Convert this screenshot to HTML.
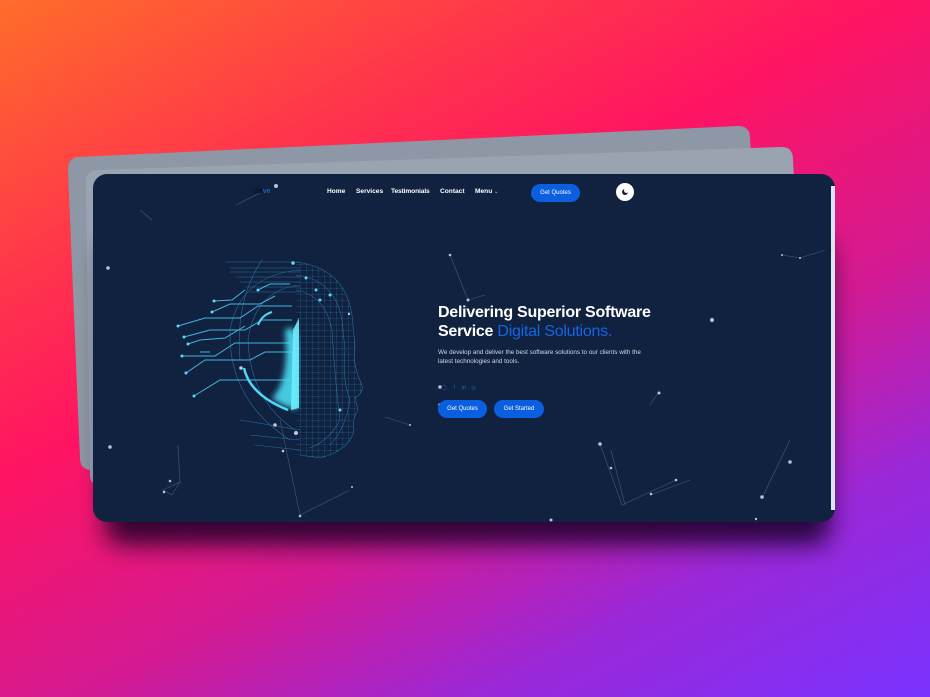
<!DOCTYPE html>
<html><head><meta charset="utf-8"><style>
*{margin:0;padding:0;box-sizing:border-box}
body{width:930px;height:697px;overflow:hidden;position:relative;font-family:"Liberation Sans",sans-serif;
background:linear-gradient(152deg,#ff6d2a 0%,#ff3a48 22%,#ff1462 40%,#d41a92 62%,#9a28d8 80%,#7a32ff 100%);}
svg.bg{position:absolute;left:0;top:0}
.t{position:absolute;color:#fff;white-space:nowrap}
.nav{top:188px;font-size:6.6px;font-weight:bold}
.btn{position:absolute;background:#0a5fe0;color:#fff;border-radius:10px;font-size:6px;text-align:center}
</style></head><body>
<svg class="bg" width="930" height="697" viewBox="0 0 930 697">
<defs>
<filter id="sh" x="-20%" y="-20%" width="140%" height="160%"><feGaussianBlur stdDeviation="12"/></filter>
<filter id="gl"><feGaussianBlur stdDeviation="3"/></filter>
<pattern id="mesh" width="6" height="6" patternUnits="userSpaceOnUse"><path d="M0,0 L6,0 M0,0 L0,6" stroke="#2a7fb5" stroke-width=".5"/><circle cx="0" cy="0" r=".7" fill="#3aa8d8"/></pattern>
<clipPath id="fc"><path d="M296,262 Q345,268 352,315 L355,345 Q352,365 362,385 Q364,392 355,398 L358,410 Q352,418 354,430 Q350,450 320,458 L296,455Z"/></clipPath>
</defs>
<path d="M78,157 L738,126 Q750,126 750,138 L760,300 L92,470 Q80,470 80,458 L68,170 Q68,158 78,157Z" fill="#8d97a5"/>
<path d="M96,170 L782,147 Q793,147 793,160 L800,300 L100,485 Q90,485 90,475 L86,182 Q86,171 96,170Z" fill="#9aa3b0"/>
<rect x="105" y="240" width="725" height="305" rx="16" fill="#120525" opacity=".85" filter="url(#sh)"/>
<rect x="93" y="174" width="742" height="348" rx="14" fill="#10223f"/>
<rect x="831" y="186" width="4" height="324" fill="#dfe5ee"/>
<g stroke="#4a6a8a" stroke-width=".6" fill="none" opacity=".8">
<path d="M140,210 L152,220"/><path d="M782,255 L800,258 L825,250"/><path d="M450,255 L468,300 L485,295"/>
<path d="M600,444 L622,505 L650,492 L676,480"/><path d="M650,495 L690,480"/><path d="M762,498 L790,440"/>
<path d="M163,490 L180,482 L172,495Z"/><path d="M180,482 L178,445"/><path d="M300,515 L350,490"/>
<path d="M650,405 L658,393"/><path d="M385,417 L410,425"/><path d="M611,450 L625,505"/><path d="M236,205 L262,192"/>
<path d="M280,420 L300,515"/>
</g>
<g fill="#b8c4d2">
<circle cx="276" cy="186" r="2"/><circle cx="108" cy="268" r="1.8"/><circle cx="450" cy="255" r="1.3"/><circle cx="468" cy="300" r="1.5"/>
<circle cx="712" cy="320" r="2"/><circle cx="782" cy="255" r="1"/><circle cx="800" cy="258" r="1"/><circle cx="110" cy="447" r="1.8"/>
<circle cx="170" cy="481" r="1.3"/><circle cx="164" cy="492" r="1.3"/><circle cx="600" cy="444" r="1.8"/><circle cx="611" cy="468" r="1.3"/>
<circle cx="790" cy="462" r="1.8"/><circle cx="762" cy="497" r="1.8"/><circle cx="676" cy="480" r="1.3"/><circle cx="651" cy="494" r="1.3"/>
<circle cx="300" cy="516" r="1.3"/><circle cx="551" cy="520" r="1.5"/><circle cx="756" cy="519" r="1.2"/><circle cx="440" cy="387" r="1.8"/>
<circle cx="440" cy="405" r="1.8"/><circle cx="659" cy="393" r="1.5"/><circle cx="410" cy="425" r="1"/><circle cx="352" cy="487" r="1"/>
</g>
<!-- face -->
<rect x="290" y="255" width="80" height="210" fill="url(#mesh)" clip-path="url(#fc)" opacity=".75"/>
<g fill="none" stroke="#2c82b8" stroke-width=".6" opacity=".8">
<path d="M296,262 Q345,268 352,315 L355,345 Q352,365 362,385 Q364,392 355,398 L358,410 Q352,418 354,430 Q350,450 320,458 L300,455"/>
<path d="M296,275 Q335,280 342,320 L345,350 Q342,380 350,400 Q345,430 330,445"/>
<path d="M296,290 Q325,295 332,330 Q335,380 340,420 Q330,440 310,448"/>
<path d="M300,270 Q240,275 230,330 Q228,400 290,440 M300,285 Q255,290 248,340 Q250,400 295,430 M262,260 Q235,300 240,360"/>
<path d="M226,262 L300,262 M230,268 L300,268 M230,272 L300,272 M236,277 L300,277 M240,282 L300,282 M246,287 L300,287 M250,292 L300,292"/>
<path d="M240,420 L300,430 M250,435 L300,440 M255,445 L300,450"/>
</g>
<g fill="none" stroke="#3fb6e0" stroke-width="1">
<path d="M178,326 L205,318 L240,318 L258,306 L292,306"/><path d="M184,337 L210,330 L245,330 L262,320 L292,320"/>
<path d="M188,344 L200,340 L225,338 L245,326"/><path d="M212,312 L230,304 L260,304 L275,296"/>
<path d="M214,301 L232,300 L245,290"/><path d="M182,356 L215,356 L235,343 L290,343"/>
<path d="M186,373 L205,360 L250,360 L265,352 L292,352"/><path d="M194,396 L220,380 L290,380"/>
<path d="M258,290 L270,284 L290,284"/><path d="M200,352 L210,352"/>
</g>
<g fill="#5fd6f5"><circle cx="178" cy="326" r="1.5"/><circle cx="184" cy="337" r="1.5"/><circle cx="188" cy="344" r="1.5"/><circle cx="212" cy="312" r="1.5"/><circle cx="214" cy="301" r="1.5"/><circle cx="182" cy="356" r="1.5"/><circle cx="186" cy="373" r="1.5"/><circle cx="194" cy="396" r="1.5"/><circle cx="258" cy="290" r="1.5"/><circle cx="293" cy="263" r="1.8"/><circle cx="306" cy="278" r="1.5"/><circle cx="316" cy="290" r="1.5"/><circle cx="330" cy="295" r="1.5"/><circle cx="320" cy="300" r="1.5"/><circle cx="340" cy="410" r="1.5"/></g>
<path d="M285,330 Q300,320 298,360 L297,410 Q280,405 272,398 Q290,380 285,330Z" fill="#4fe6ff" opacity=".85" filter="url(#gl)"/>
<path d="M293,330 L299,318 L299,408 L291,410Z" fill="#6ef0ff" opacity=".9"/>
<path d="M244,368 Q250,395 288,410" stroke="#4fd8f5" stroke-width="2.5" fill="none"/>
<path d="M258,325 Q262,315 272,312" stroke="#4fd8f5" stroke-width="2" fill="none"/>
<g fill="#c0cad6"><circle cx="241" cy="368" r="1.8"/><circle cx="275" cy="425" r="1.8"/><circle cx="296" cy="433" r="2"/><circle cx="283" cy="451" r="1.3"/><circle cx="349" cy="314" r="1.2"/></g>
</svg>
<div class="t" style="left:253px;top:188px;font-size:7px;color:#0a1020;font-weight:bold">cla<span style="color:#1f5fc0">ve</span></div>
<div class="t nav" style="left:327px">Home</div>
<div class="t nav" style="left:356px">Services</div>
<div class="t nav" style="left:391px;letter-spacing:-.1px">Testimonials</div>
<div class="t nav" style="left:440px">Contact</div>
<div class="t nav" style="left:475px">Menu <span style="font-size:5px;color:#aab">⌄</span></div>
<div class="btn" style="left:531px;top:184px;width:49px;height:18px;line-height:18px;border-radius:9px">Get Quotes</div>
<div style="position:absolute;left:616px;top:183px;width:18px;height:18px;border-radius:50%;background:#fff"></div>
<div style="position:absolute;left:622px;top:189px;width:6px;height:6px;border-radius:50%;background:#10223f"></div>
<div style="position:absolute;left:624px;top:188px;width:5px;height:5px;border-radius:50%;background:#fff"></div>
<div class="t" style="left:438px;top:303px;font-size:16px;font-weight:bold;line-height:19px;letter-spacing:-.25px">Delivering Superior Software<br>Service <span style="color:#1565e8;font-weight:normal">Digital Solutions.</span></div>
<div class="t" style="left:438px;top:348px;font-size:6.3px;line-height:9px;color:#d0d8e4">We develop and deliver the best software solutions to our clients with the<br>latest technologies and tools.</div>
<div class="t" style="left:441px;top:385px;font-size:5px;color:#1f6fe0">◯&nbsp;&nbsp;&nbsp;&nbsp;&nbsp;f&nbsp;&nbsp;&nbsp;&nbsp;&nbsp;in&nbsp;&nbsp;&nbsp;&nbsp;◎</div>
<div class="btn" style="left:438px;top:400px;width:49px;height:18px;line-height:18px;border-radius:9px">Get Quotes</div>
<div class="btn" style="left:494px;top:400px;width:50px;height:18px;line-height:18px;border-radius:9px">Get Started</div>
</body></html>
